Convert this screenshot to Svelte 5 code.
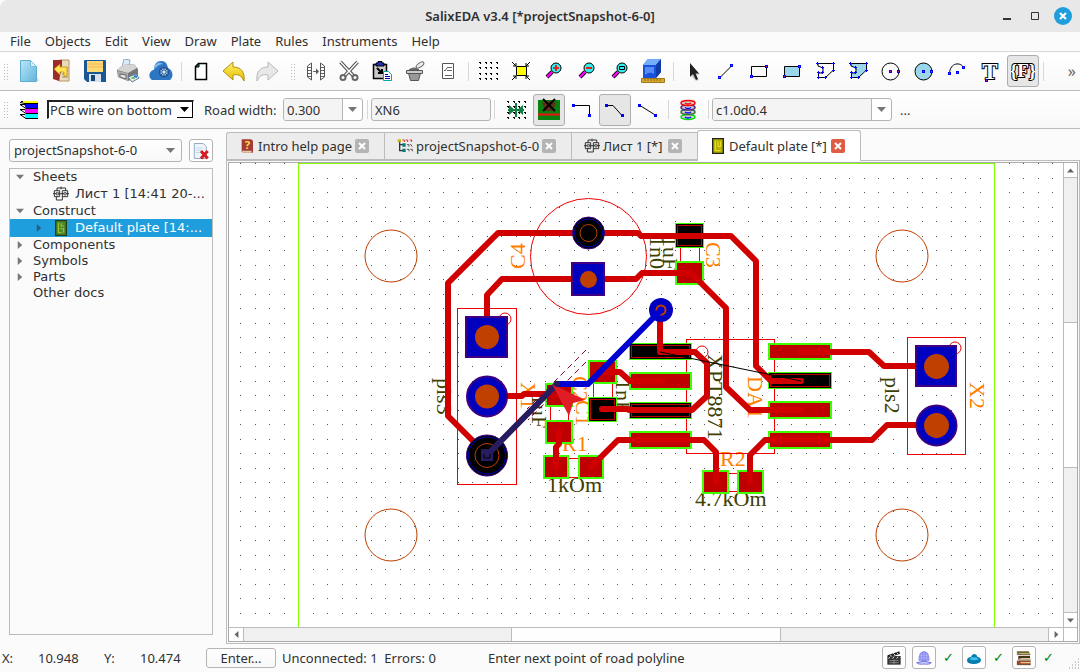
<script>
  const menus = ['File', 'Objects', 'Edit', 'View', 'Draw', 'Plate', 'Rules', 'Instruments', 'Help'];

  const gridDots = [3, 8, 14, 19]
    .map((y) => [3, 9, 14, 20].map((x) => `<path d="M${x} ${y}h2v2h-1v-1h-1z"/>`).join(''))
    .join('');
  const lens = '<path d="M10 13l-5 5" stroke="#000" stroke-width="4"/><path d="M10 13l-5 5" stroke="#f0f" stroke-width="2.4"/><circle cx="14" cy="9" r="5" fill="#3ee" stroke="#000"/>';
  const node = (x, y) => `<path d="M${x - 1.5} ${y - 1.5}h3v3h-3z" fill="#00f"/>`;
  const rnode = (x, y) => `<path d="M${x - 1.5} ${y - 1.5}h3v3h-3z" fill="#00f"/><path d="M${x - 0.5} ${y - 0.5}h1v1h-1z" fill="#f02060"/>`;
  const poly = 'M5 4.500H20.500V11L12.500 18.500H5.500V14H10V9L5 7z';
  const polyNodes = [[4.5, 4.500], [20.500, 4.500], [20.500, 11.500], [12.500, 18.500], [5.500, 18.500], [5.500, 13.500], [9.500, 13.500], [9.500, 8.500]]
    .map(([x, y]) => `<path d="M${x - 1.5} ${y}h3M${x} ${y - 1.5}v3" stroke="#00f"/>`).join('');
  const brd = 'fill="none" stroke="#000"';
  const sheet = '<path d="M2 7h8v9H2zM14 7h8v9h-8zM6 7V3h13v4M12 1v4M0 11.500h24M5 16v5h9v-5" fill="none" stroke="#333" stroke-width="1.500"/><path d="M5 9.500h3v4H5zM16.500 9.500h3v4h-3z" fill="#ccc" stroke="#333"/>';

  const icons = {
    new: '<path d="M3.500 1.500h10l6 6v15h-16z" fill="url(#gPaper)" stroke="#5eabd0"/><path d="M13.500 1.500v6h6z" fill="#d8f2fd" stroke="#79bbda"/><path d="M19 22h3l-2-4z" fill="#aaa" opacity=".5"/>',
    exit: '<path d="M9 1h10v21H9z" fill="#e8dcbd" stroke="#b99662"/><path d="M12 9h6M12 12h6M12 15h6M12 18h6" stroke="#b8a584" stroke-width="1.500"/><path d="M3 1h9v5l-3 16-6-2z" fill="#9d2b2b"/><path d="M4 10l6-5v3h7v9h-3v-4h-4v3z" fill="#ffe35a" stroke="#ba8500" stroke-width=".7"/>',
    save: '<path d="M2 1h20q1 0 1 1v21H4l-3-3V2q0-1 1-1z" fill="#1b5793"/><path d="M4 2h16v11H4z" fill="#ffd978"/><path d="M4 5h16M4 8h16" stroke="#f1b94d"/><path d="M6 15h12v8H6z" fill="#d8e2eb"/><path d="M8 16h4v6H8z" fill="#174576"/>',
    print: '<path d="M6 8l2-8 6 1-1 8z" fill="#dcebfa" stroke="#8ca9c8"/><path d="M1 11l6-5 11-1 4 5v8l-10 4L2 18z" fill="#777"/><path d="M1 11l6-5 11-1 3 4-9 5z" fill="#d4d4d4"/><path d="M2 12l10 2v8L2 18z" fill="#aaa"/><path d="M4 15l6 1v4l-6-2z" fill="#e4e4e4" stroke="#666"/><path d="M12 18l8-3 3 4-7 4z" fill="#e6f2dd" stroke="#607a9b"/><path d="M14 19l4-1 1 2z" fill="#37a440"/><path d="M18 17l3 1" stroke="#247ad2" stroke-width="2"/>',
    cloud: '<path d="M3 21c-5-3-2-10 2-10 0-6 3-9 7-9 5 0 6 3 7 7 5 2 6 9 2 12z" fill="#2c76c4"/><path d="M5 10c0-5 5-8 9-5-4 0-6 3-9 5z" fill="#83b9ec"/><circle cx="15" cy="13" r="4.500" fill="#9cc4e8" stroke="#24518d" stroke-width="1.500"/><path d="M15 8v10M10 13h10M11.500 9.500l7 7M18.500 9.500l-7 7" stroke="#24518d"/><circle cx="15" cy="13" r="1.500" fill="#d3e8fa"/>',
    doc: `<path d="M9.500 4.500h8v16h-11v-13z" fill="#fff" stroke="#000" stroke-width="1.500"/><path d="M6.500 8l3.500-3.500V8z" fill="#078080" stroke="#000"/>`,
    undo: '<path d="M1 12L11 3v5c8 0 12 5 11 14-3-6-6-7-11-6v5z" fill="url(#gYellow)" stroke="#b38f0c"/>',
    redo: '<path d="M23 12L13 3v5C5 8 1 13 2 22c3-6 6-7 11-6v5z" fill="#e8e8e8" stroke="#b8b8b8"/>',
    gap: '<path d="M3.500 7l4-3v17l-4-3zM20.500 7l-4-3v17l4-3z" fill="none" stroke="#555"/><path d="M4 8.500h3M4 11.500h3M4 14.500h3M4 17.500h3M17 8.500h3M17 11.500h3M17 14.500h3M17 17.500h3M9 12.500h5" stroke="#666"/><path d="M12 9.500l3 3-3 3z" fill="#555"/>',
    cut: '<path d="M3.500 3l13 14M20.500 3l-13 14" stroke="#555" stroke-width="3.500"/><path d="M3.500 3l13 14M20.500 3l-13 14" stroke="#fff" stroke-width="1.300"/><circle cx="6" cy="18.500" r="2.500" fill="none" stroke="#666" stroke-width="2"/><circle cx="18" cy="18.500" r="2.500" fill="none" stroke="#666" stroke-width="2"/>',
    paste: '<path d="M3.500 5.500h13v14h-13z" fill="#c8c8c8" stroke="#000" stroke-width="1.500"/><path d="M6 4h2V2.500h4V4h2v3H6z" fill="#2030b0" stroke="#000"/><path d="M7 9l5 5M12 10v4H8" fill="none" stroke="#000" stroke-width="2"/><path d="M13.500 12.500h5l3 3v6h-8z" fill="#fff" stroke="#0aa"/><path d="M15 15.500h3M15 17.500h5M15 19.500h5" stroke="#00a"/>',
    trash: '<path d="M5.500 14l2 7.500h8l2-7.500z" fill="#999" stroke="#555"/><path d="M3.500 11.500h16v3h-16z" fill="#ccc" stroke="#555"/><path d="M6 11q5-4 10 0z" fill="#888" stroke="#555"/><ellipse cx="17" cy="6" rx="4.500" ry="2" transform="rotate(-35 17 6)" fill="#eee" stroke="#666"/>',
    list: '<path d="M6.500 4.500h11v15h-11z" fill="#fff" stroke="#555"/><path d="M11 8.500h5M11 11.500h5M9 16.500h7M8 11l1 1 2-3" fill="none" stroke="#666"/>',
    dots: gridDots,
    fit: '<path d="M7.500 7.500h10v9h-10z" fill="#ff0" stroke="#000"/><path d="M3 3l4 4M21 3l-4 4M3 21l4-4M21 21l-4-4M4 7h3V4M17 4v3h3M4 17h3v3M20 17h-3v3" fill="none" stroke="#000"/>',
    zin: lens + '<path d="M11 9h6M14 6v6" stroke="#f00" stroke-width="1.600"/>',
    zout: lens + '<path d="M11 9h6" stroke="#f00" stroke-width="1.800"/>',
    zall: lens + '<path d="M11.500 7.500h5v3h-5z" fill="none" stroke="#000"/>',
    cube: '<path d="M2 6l5-6h13v13l-5 6H2z" fill="#1953dc"/><path d="M2 6l5-6h13l-5 6z" fill="#75adfb"/><path d="M15 6l5-6v13l-5 6z" fill="#103ba9"/><path d="M4 8h9v7q-5-3-9 1z" fill="#568df4"/><path d="M.5 19.500h23v4H.5z" fill="#d8aa32" stroke="#a07a1a"/><path d="M4 20v2M7 20v2M10 20v2M13 20v2M16 20v2M19 20v2" stroke="#8a6613"/>',
    cursor: '<path d="M11 7l8 8-4 1 3 5-3 1-4-4z" fill="#aaa" opacity=".6"/><path d="M9 4v14l3-3 3 6 2-1-2.500-5.500H18z" fill="#222"/>',
    line: `<path d="M6 18.500L18 6.500" ${brd}/>` + rnode(5.5, 18.5) + rnode(17.5, 6.5),
    rect: `<path d="M4.500 7.500h15v10h-15z" ${brd}/>` + rnode(4.5, 17.5) + rnode(19.5, 7.5),
    rectf: '<path d="M4.500 7.500h15v10h-15z" fill="#9ad7ea" stroke="#000"/>' + rnode(4.5, 17.5) + rnode(19.5, 7.5),
    poly: `<path d="${poly}" ${brd}/>` + polyNodes,
    polyf: `<path d="${poly}" fill="#9ad7ea" stroke="#000"/>` + polyNodes,
    circ: `<circle cx="11.500" cy="12.500" r="8.500" ${brd}/>` + rnode(11.5, 12.5) + rnode(19.5, 12.5),
    circf: '<circle cx="11.500" cy="12.500" r="8.500" fill="#9ad7ea" stroke="#000"/>' + rnode(11.5, 12.5) + rnode(19.5, 12.5),
    arc: `<path d="M4.500 14.500C5 3 16 3 18.500 8.500" ${brd}/>` + rnode(4.5, 14.5) + rnode(12.5, 13.5) + rnode(18.5, 8.5),
    text: '<text x="12" y="20" text-anchor="middle" font-family="Liberation Serif, serif" font-weight="bold" font-size="23" fill="#fff" stroke="#000" stroke-width="2" paint-order="stroke">T</text>' + rnode(8.5, 21.5),
    func: '<text x="12" y="18" text-anchor="middle" font-family="Liberation Serif, serif" font-weight="bold" font-size="19" fill="#fff" stroke="#000" stroke-width="2" paint-order="stroke">{F}</text>',
    layers: '<path d="M6 3h15v2H7z" fill="#ff0"/><path d="M7 6h14v4.500H9z" fill="#00f"/><path d="M7 11h14v4.500H9z" fill="#f0f"/><path d="M7 16h14v4.500H9z" fill="#0ff"/><path d="M6 3.500H4M21 5.500H8L3 4.500M21 10.500H9L3 6.500h5M21 15.500H9L3 11.500h5M21 20.500H9L3 16.500h5" fill="none" stroke="#000"/>',
    snap: gridDots + '<path d="M5 7l6 5-6 5zM19 7l-6 5 6 5z" fill="#108040"/><path d="M4 12h16M12 5v14" stroke="#108040" stroke-width="2"/>',
    board: '<path d="M1 2h22v20H1z" fill="#078010"/><path d="M5 5q7-4 14 0l-3 8H8z" fill="#603018"/><path d="M6 1l12 12M18 1L6 13" stroke="#000" stroke-width="2"/><path d="M1 16.500h22" stroke="#f01010" stroke-width="2"/>',
    bend: `<path d="M4 7.500h15.500v10" ${brd}/>` + node(3.5, 7.5) + node(19.5, 17.5),
    bevel: `<path d="M4 7.500h6l9 10" ${brd}/>` + node(3.5, 7.5) + node(19.5, 17.5),
    straight: `<path d="M4 7.500l16 10" ${brd}/>` + node(3.5, 7.5) + node(19.5, 17.5),
    stack: [[19, '#0d1'], [14, '#3a6a3a'], [9.5, '#52258a'], [5, '#f00']].map(([y, c]) => `<ellipse cx="12" cy="${y}" rx="7" ry="2.400" fill="#ccc" stroke="${c}" stroke-width="1.500"/><path d="M9 ${y}q3 2 6 0" fill="none" stroke="${y === 5 ? '#f00' : '#00f'}" stroke-width="1.500"/>`).join(''),
    closeproj: '<path d="M3 2h12l4 4v16H3z" fill="#edf5fc" stroke="#7590ae"/><path d="M5 8h9M5 11h8M5 14h6" stroke="#b8cee2"/><path d="M12 12l9 10M21 12l-9 10" stroke="#d51c20" stroke-width="4"/>',
    help: '<path d="M4 2h14l3 2v18H6l-2-2z" fill="#a53937"/><path d="M4 19h15v3H6z" fill="#dccaa8"/><text x="12.500" y="17" text-anchor="middle" font-family="Noto Sans, sans-serif" font-weight="bold" font-size="17" fill="#ffdf33">?</text>',
    tree: '<path d="M4 5v15M4 10h6M4 19h6" stroke="#333" stroke-width="2" fill="none"/><path d="M1 2h5v4H1z" fill="#bb0"/><path d="M8 8h5v5H8zM8 16h5v5H8z" fill="#087c7c"/><path d="M8 3h3v3M13 3h3v3M19 3h3v3" stroke="#d33" stroke-width="1.500" fill="none"/><path d="M15 10h3v3M20 9l3 4M15 17h3v3M20 17h3v3" stroke="#555" stroke-width="1.500" fill="none"/>',
    sheet,
    plate: '<path d="M4 1h16v22H4z" fill="#4c8a2c" stroke="#263e16" stroke-width="2"/><path d="M8 4v15h5M12 5v4h4M16 12v7M11 13h3" fill="none" stroke="#a8c83a" stroke-width="1.500"/>',
    platey: '<path d="M4 1h16v22H4z" fill="#b5b000" stroke="#222" stroke-width="2"/><path d="M8 4v15h8M12 5v8h4V5" fill="none" stroke="#ece52a" stroke-width="1.500"/>',
    clap: '<path d="M2 9h20v13H2z" fill="#333"/><path d="M2 8l18-6 1 4-17 5z" fill="#222"/><path d="M6 7l3 3M11 5l3 3M16 4l3 3M6 10l-2 3M12 10l-2 3M18 10l-2 3" stroke="#ddd" stroke-width="1.500"/><path d="M5 16h14M5 19h14M12 14v7" stroke="#aaa"/>',
    helmet: '<path d="M4 16C3 5 8 2 12 2s9 3 8 14z" fill="#8b8df1"/><path d="M12 3v12M8 4v11M16 4v11M5 8h14M4 12h16" stroke="#b5b7fb"/><path d="M8 15h8v5H8z" fill="#8b8df1"/><path d="M1 19q11-4 22 0-2 3-11 2-9 1-11-2z" fill="#d4d6ff" stroke="#7072db" stroke-width="1.500"/>',
    blob: '<path d="M3 19c-4-5 1-9 5-9 1-6 8-5 9 0 6 1 7 6 3 9q-8 4-17 0z" fill="#087cad"/><path d="M5 13c3-3 5-2 7-2s5 0 7 3c-5 2-9 2-14-1z" fill="#38c6ec"/>',
    books: '<path d="M2 2h17l3 5H4z" fill="#6a652e"/><path d="M4 9h17v4H4z" fill="#443317"/><path d="M2 16h20v6H2z" fill="#a24726"/><path d="M5 5h16v3H5zM7 12h15v2H7zM7 18h15v2H7z" fill="#e0c894"/><path d="M2 2v5h19M4 9v6h18M2 16v6h20" fill="none" stroke="#3b2510"/>'
  };

  const bar1 = [
    ['new', 'exit', 'save', 'print', 'cloud'], '|', ['doc', 'undo', 'redo'], ':',
    ['gap', 'cut', 'paste', 'trash', 'list'], '|', ['dots', 'fit', 'zin', 'zout', 'zall', 'cube'], '|',
    ['cursor', 'line', 'rect', 'rectf', 'poly', 'polyf', 'circ', 'circf', 'arc', 'text', 'func'], '|'
  ];
  const tabs = [
    { t: 'Intro help page', i: 'help', w: 158 },
    { t: 'projectSnapshot-6-0', i: 'tree', w: 187 },
    { t: 'Лист 1 [*]', i: 'sheet', w: 126 },
    { t: 'Default plate [*]', i: 'platey', w: 164, on: true }
  ];
  const rows = [
    { t: 'Sheets', a: 'down' },
    { t: 'Лист 1 [14:41 20-...', i: 'sheet', child: true },
    { t: 'Construct', a: 'down' },
    { t: 'Default plate [14:...', i: 'plate', child: true, a: 'right', on: true },
    { t: 'Components', a: 'right' },
    { t: 'Symbols', a: 'right' },
    { t: 'Parts', a: 'right' },
    { t: 'Other docs' }
  ];

  const pads = [
    { x: 675, y: 261, w: 29, h: 24 }, { x: 675, y: 223, w: 29, h: 25, sel: true },
    { x: 588, y: 360, w: 29, h: 24 }, { x: 588, y: 397, w: 29, h: 25, sel: true },
    { x: 545, y: 383, w: 28, h: 24 }, { x: 545, y: 420, w: 28, h: 24 },
    { x: 543, y: 455, w: 26, h: 24 }, { x: 578, y: 455, w: 26, h: 24 },
    { x: 702, y: 470, w: 27, h: 24 }, { x: 737, y: 470, w: 27, h: 24 },
    { x: 629, y: 343, w: 63, h: 17, sel: true }, { x: 629, y: 372, w: 63, h: 18 },
    { x: 629, y: 402, w: 63, h: 17, sel: true }, { x: 629, y: 431, w: 63, h: 18 },
    { x: 768, y: 343, w: 64, h: 17 }, { x: 768, y: 372, w: 64, h: 17, sel: true },
    { x: 768, y: 401, w: 64, h: 18 }, { x: 768, y: 431, w: 64, h: 18 }
  ];
  const traces = [
    '588,233 498,233 448,283 448,416 487,455',
    '588,233 638,233 641,236 731,236 756,261 756,366 771,381 801,381',
    '487,337 487,295 502,279 588,279', '588,279 636,279 642,273 691,273 726,308 726,387 750,410 801,410',
    '660,310 660,352 695,352 707,363 707,396 692,410 630,410 628,409 602,409',
    '602,372 620,372 630,381 662,381', '591,467 618,440 704,440 716,452 716,482',
    '750,482 750,455 765,440 872,440 887,425 936,425', '801,352 869,352 884,366 936,366',
    '487,396 522,396 524,394 559,394', '559,431 559,444 556,447 556,467'
  ];
  const labels = [
    ['C4', 525, 269, -90, 1], ['C3', 706, 242, 90, 1], ['X1', 521, 382, 90, 1], ['C2', 573, 376, 90, 1],
    ['C1', 576, 400, 90, 1], ['DA1', 748, 376, 90, 1], ['X2', 970, 382, 90, 1], ['R1', 562, 451, 0, 1],
    ['R2', 720, 466, 0, 1], ['1kOm', 547, 492, 0], ['4.7kOm', 695, 506, 0], ['pls3', 437, 378, 90],
    ['pls2', 885, 377, 90], ['XPT8871', 708, 354, 90], ['1n0', 650, 236, 90], ['1uF', 663, 236, 90],
    ['1uF', 532, 394, 90], ['1nF', 616, 379, 90]
  ];
</script>

{#snippet icon(name, size = 24)}
  <svg width={size} height={size} viewBox="0 0 24 24" aria-hidden="true">{@html icons[name]}</svg>
{/snippet}

{#snippet tri(dir)}
  <svg width="9" height="9" viewBox="0 0 9 9" aria-hidden="true">
    <path fill="currentColor" d={{ down: 'M0 2h9L4.500 7z', right: 'M2 0v9L7 4.500z', left: 'M7 0v9L2 4.500z', up: 'M0 7h9L4.500 2z' }[dir]} />
  </svg>
{/snippet}

<svg class="defs" width="0" height="0" aria-hidden="true">
  <linearGradient id="gPaper" x2="1" y2="1"><stop stop-color="#b9e6f8" /><stop offset="1" stop-color="#5fb4db" /></linearGradient>
  <linearGradient id="gYellow" x2="0" y2="1"><stop stop-color="#fff46b" /><stop offset="1" stop-color="#e8b900" /></linearGradient>
</svg>

<div class="window">
  <header class="title">
    <h1>SalixEDA v3.4 [*projectSnapshot-6-0]</h1>
    <div class="winbtns">
      <button aria-label="Minimize"><svg width="20" height="20"><path d="M6 13h8" stroke="#333" stroke-width="2" /></svg></button>
      <button aria-label="Maximize"><svg width="20" height="20"><path d="M6.500 6.500h7v7h-7z" fill="none" stroke="#333" /></svg></button>
      <button aria-label="Close"><svg width="20" height="20"><circle cx="10" cy="10" r="9" fill="#1f9ede" /><path d="M7 7l6 6M13 7l-6 6" stroke="#fff" stroke-width="2" /></svg></button>
    </div>
  </header>

  <nav class="menu">
    {#each menus as m}<button>{m}</button>{/each}
  </nav>

  <div class="bar">
    <i class="grip first"></i>
    {#each bar1 as g}
      {#if g === '|'}<i class="sep"></i>
      {:else if g === ':'}<i class="grip"></i>
      {:else}
        {#each g as n}<button class="tool" class:on={n === 'func'} aria-label={n}>{@render icon(n)}</button>{/each}
      {/if}
    {/each}
    <button class="more" aria-label="More tools">»</button>
  </div>

  <div class="bar second">
    <i class="grip first"></i>
    <span class="tool">{@render icon('layers')}</span>
    <div class="layer">
      <select aria-label="Layer"><option>PCB wire on bottom</option></select>
      <span class="drop">{@render tri('down')}</span>
    </div>
    <label for="width">Road width:</label>
    <div class="combo narrow"><input id="width" value="0.300" /><button aria-label="Widths">{@render tri('down')}</button></div>
    <i class="sep"></i>
    <input class="net" aria-label="Net" value="XN6" />
    <i class="sep"></i>
    {#each ['snap', 'board', 'bend', 'bevel', 'straight'] as n}
      <button class="tool" class:on={n === 'board' || n === 'bevel'} aria-label={n}>{@render icon(n)}</button>
    {/each}
    <i class="sep"></i>
    <button class="tool" aria-label="Via stack">{@render icon('stack')}</button>
    <i class="sep"></i>
    <div class="combo wide"><input aria-label="Via" value="c1.0d0.4" /><button aria-label="Vias">{@render tri('down')}</button></div>
    <button class="dots" aria-label="Choose via">...</button>
  </div>

  <main>
    <aside>
      <div class="project">
        <div class="pick">
          <select aria-label="Project"><option>projectSnapshot-6-0</option></select>
          <span>{@render tri('down')}</span>
        </div>
        <button aria-label="Close project">{@render icon('closeproj', 18)}</button>
      </div>
      <ul class="tree">
        {#each rows as r}
          <li class:child={r.child} class:on={r.on}>
            <span class="arrow">{#if r.a}{@render tri(r.a)}{/if}</span>
            {#if r.i}<span class="pic">{@render icon(r.i, 16)}</span>{/if}{r.t}
          </li>
        {/each}
      </ul>
    </aside>

    <section class="work">
      <div class="tabs">
        {#each tabs as t}
          <div class="tab" class:on={t.on} style:width="{t.w}px">
            {@render icon(t.i, 16)}
            <button class="name">{t.t}</button>
            <button class="x" aria-label="Close {t.t}"><svg width="14" height="14"><path d="M4 4l6 6M10 4l-6 6" stroke="#fff" stroke-width="2" /></svg></button>
          </div>
        {/each}
      </div>
      <div class="pane">
        <div class="view">
          <div class="canvas">
            <svg class="pcb" width="100%" height="100%">
              <defs>
                <pattern id="grid" width="29" height="29" patternUnits="userSpaceOnUse" x="240" y="178">
                  <path d="M0 0h1v1h-1zM15 0h1v1h-1zM0 14h1v1h-1zM15 14h1v1h-1z" fill="#555" />
                </pattern>
              </defs>
              <g transform="translate(-229 -163)">
                <rect x="229" y="163" width="3000" height="2000" fill="url(#grid)" shape-rendering="crispEdges" />
                <path class="edge" d="M298.500 2000V163.500H994.500V2000" />
                {#each [[391, 256], [902, 256], [391, 535], [902, 535]] as [x, y]}<circle class="hole" cx={x} cy={y} r="26" />{/each}
                {#each labels as [t, x, y, a, o]}
                  <text class:orange={o} transform="translate({x} {y}) rotate({a})">{t}</text>
                {/each}
                <g class="silk">
                  <circle cx="588.500" cy="256.500" r="58" />
                  <rect x="457.500" y="308.500" width="59" height="176" />
                  <rect x="907.500" y="337.500" width="58" height="117" />
                  <rect x="686.500" y="339.500" width="88" height="114" />
                  <circle cx="505" cy="319" r="6" /><circle cx="955" cy="348" r="6" /><circle cx="702" cy="352" r="6" />
                  <path d="M680.500 248v13M699.500 248v13M593.500 384v13M612.500 384v13M550.500 407v13M568.500 407v13M569 458.500h9M569 477.500h9M729 473.500h8M729 491.500h8" />
                </g>
                {#each pads as p}
                  {#if p.sel}
                    <rect x={p.x + 0.5} y={p.y + 0.5} width={p.w - 1} height={p.h - 1} fill="#000" stroke="#40ff00" />
                    <rect x={p.x + 2.5} y={p.y + 2.5} width={p.w - 5} height={p.h - 5} fill="none" stroke="#bf0000" />
                  {:else}
                    <rect x={p.x + 1} y={p.y + 1} width={p.w - 2} height={p.h - 2} fill="#bf0000" stroke="#40ff00" stroke-width="2" />
                  {/if}
                {/each}
                {#each traces as t}<polyline class="trace" points={t} />{/each}
                <g class="pad">
                  <rect x="572" y="263" width="32" height="32" /><rect x="466" y="317" width="41" height="40" /><rect x="916" y="346" width="40" height="40" />
                  <circle cx="487" cy="396.500" r="20" /><circle cx="936.500" cy="425.500" r="20" />
                </g>
                <g fill="#bf4000">
                  <circle cx="588.500" cy="279.500" r="8.500" /><circle cx="487" cy="337" r="12" /><circle cx="487" cy="396.500" r="12" />
                  <circle cx="936.500" cy="366.500" r="12.500" /><circle cx="936.500" cy="425.500" r="12.500" />
                </g>
                <g fill="none">
                  <circle cx="588.500" cy="233" r="16" fill="#000" stroke="#400080" /><circle cx="588.500" cy="233" r="14" stroke="#0000bf" /><circle cx="588.500" cy="233" r="8.500" stroke="#bf4000" />
                  <circle cx="487" cy="455.500" r="20.500" fill="#000" stroke="#400080" /><circle cx="487" cy="455.500" r="18.500" stroke="#0000bf" /><circle cx="487" cy="455.500" r="12" stroke="#bf4000" />
                  <circle cx="661" cy="310" r="12" fill="#0000bf" /><circle cx="661" cy="310" r="4.500" stroke="#bf4000" stroke-width="2" />
                </g>
                <path d="M660 352L801 381" stroke="#000" fill="none" />
                <path d="M586 350L527 409M586 362L528 420" stroke="#900030" stroke-dasharray="6 4" fill="none" />
                <polyline points="557,384 588,384 661,310" fill="none" stroke="#0000d0" stroke-width="6" stroke-linecap="round" />
                <path d="M487 455L557 384" stroke="#281c60" stroke-width="6" stroke-linecap="round" />
                <path d="M481 449h12v12h-12z" fill="#281c60" /><path d="M484 454v4h6v-4" fill="none" stroke="#000" />
                <path d="M552 384L585 400L573 403L569 416z" fill="#e01c24" />
                <circle cx="557" cy="384" r="3" fill="#281c60" />
              </g>
            </svg>
          </div>
          <div class="vbar">
            <span>{@render tri('up')}</span><div class="track"><i></i></div><span>{@render tri('down')}</span>
          </div>
          <div class="hbar">
            <span>{@render tri('left')}</span><div class="track"><i></i></div><span>{@render tri('right')}</span>
          </div>
          <div class="corner"></div>
        </div>
      </div>
    </section>
  </main>

  <footer>
    <span class="k">X:</span><span class="v">10.948</span>
    <span class="k">Y:</span><span class="v">10.474</span>
    <button class="enter">Enter...</button>
    <span class="stat">Unconnected: 1&nbsp; Errors: 0</span>
    <span class="hint">Enter next point of road polyline</span>
    <div class="state">
      <button aria-label="Video">{@render icon('clap', 16)}</button>
      {#each ['helmet', 'blob', 'books'] as n}
        <button aria-label={n}>{@render icon(n, 16)}</button><b>✓</b>
      {/each}
    </div>
    <svg class="size" width="12" height="12" aria-hidden="true"><path d="M10 1h1M7 4h1M10 4h1M4 7h1M7 7h1M10 7h1M1 10h1M4 10h1M7 10h1M10 10h1" stroke="#999" /></svg>
  </footer>
</div>

<style>
  :global(body) { margin: 0; }
  .window {
    height: 100vh; display: flex; flex-direction: column; overflow: hidden;
    background: #fbfbfb; color: #303030; font: 13px/16px "Noto Sans", sans-serif;
  }
  .window :global(*) { box-sizing: border-box; }
  .defs { position: absolute; }
  svg { display: block; flex: none; }
  button, input, select { font: inherit; color: inherit; margin: 0; }
  button { padding: 0; border: 0; background: none; white-space: nowrap; }
  .title { display: grid; grid-template-columns: 1fr auto 1fr; align-items: center; height: 32px; flex: none; background: #e8e8e8; border-radius: 8px 0 0; }
  h1 { grid-column: 2; margin: 0; font-size: 13px; font-weight: 600; }
  .winbtns { display: flex; justify-content: flex-end; gap: 8px; padding-right: 7px; }
  .menu { display: flex; gap: 14px; height: 20px; flex: none; padding: 0 10px 2px; border-bottom: 1px solid #d8d8d8; }
  .bar { display: flex; align-items: center; height: 39px; flex: none; background: linear-gradient(#fff, #f8f8f8); border-bottom: 1px solid #bcbcbc; }
  .bar.second { height: 38px; }
  .grip { flex: none; width: 16px; height: 17px; background: radial-gradient(circle, #bbb 1px, transparent 1px) 0 0/3px 3px; background-clip: content-box; padding: 0 4px 0 6px; }
  .grip.first { width: 13px; padding: 0 4px; }
  .sep { flex: none; width: 7px; height: 19px; padding: 0 3px; background: #d8d8d8 content-box; }
  .tool { flex: none; width: 32px; height: 32px; margin-right: 1px; display: grid; place-items: center; border: 1px solid transparent; border-radius: 3px; }
  .tool.on { background: #e6e6e6; border-color: #adadad; }
  .more { margin: 0 4px 0 auto; font-size: 16px; color: #666; }
  .layer { position: relative; width: 147px; height: 19px; margin-left: 1px; flex: none; border: 1px solid #fff; border-top: 2px solid #222; border-left: 2px solid #222; background: #fff; }
  select { appearance: none; width: 100%; border: 0; background: none; padding: 0; outline: 0; }
  .layer select { height: 16px; padding-left: 1px; line-height: 16px; }
  .drop { position: absolute; right: 0; top: 0; width: 16px; height: 16px; display: grid; place-items: center; color: #000; border-right: 1px solid #000; border-bottom: 1px solid #000; background: #fff; pointer-events: none; }
  .bar label { width: 89px; padding-left: 10px; white-space: nowrap; flex: none; }
  .combo { display: flex; height: 23px; border: 1px solid #b4b4b4; border-radius: 3px; background: #fff; overflow: hidden; color: #303030; }
  .combo input { flex: 1; min-width: 0; border: 0; padding: 0 3px; background: #f4f4f4; outline: 0; }
  .combo button { width: 20px; border-left: 1px solid #b4b4b4; display: grid; place-items: center; color: #777; }
  .narrow { width: 80px; margin-right: 1px; }
  .wide { width: 180px; }
  .net { width: 120px; height: 23px; padding: 0 3px; border: 1px solid #b4b4b4; border-radius: 3px; background: #f4f4f4; }
  .net + .sep { width: 9px; padding-right: 5px; }
  .dots { margin-left: 8px; }
  main { flex: 1; min-height: 0; display: flex; }
  aside { width: 226px; flex: none; padding: 10px 13px 10px 9px; display: flex; flex-direction: column; gap: 6px; }
  .project { display: flex; gap: 7px; height: 23px; }
  .pick { flex: 1; position: relative; border: 1px solid #b4b4b4; border-radius: 3px; background: linear-gradient(#fff, #f8f8f8); }
  .pick select { height: 20px; padding-left: 4px; }
  .pick span { position: absolute; right: 6px; top: 6px; color: #777; pointer-events: none; }
  .project button { width: 24px; border: 1px solid #b4b4b4; border-radius: 3px; display: grid; place-items: center; background: #fff; }
  .tree { flex: 1; margin: 0; padding: 0; list-style: none; border: 1px solid #bcbcbc; font-family: "DejaVu Sans", sans-serif; overflow: hidden; }
  .tree li { display: flex; align-items: center; height: 16px; padding-left: 6px; white-space: nowrap; }
  .tree li.child { height: 18px; padding-left: 25px; }
  .tree li.on { background: #1f9ede; color: #fff; }
  .tree .arrow :global(svg) { width: 8px; height: 8px; }
  .arrow { width: 17px; color: #777; }
  .child .arrow { width: 18px; }
  .on .arrow { color: #25608a; }
  .pic { width: 22px; }
  .work { flex: 1; min-width: 0; display: flex; flex-direction: column; }
  .tabs { display: flex; align-items: flex-end; height: 31px; padding-top: 1px; flex: none; }
  .tab { display: flex; align-items: center; gap: 3px; height: 28px; padding: 0 15px 0 12px; border: 1px solid #bcbcbc; border-right: 0; background: #ececec; }
  .tab:first-child { border-radius: 3px 0 0; }
  .tab.on { height: 31px; background: #fff; border-right: 1px solid #bcbcbc; border-bottom: 0; border-radius: 3px 3px 0 0; margin-bottom: -1px; z-index: 1; }
  .name { flex: 1; text-align: left; }
  .x { background: #b4b4b4; border-radius: 2px; }
  .tab.on .x { background: #df5b43; }
  .pane { flex: 1; min-height: 0; padding: 1px; border: 1px solid #bcbcbc; margin-bottom: 1px; }
  .view { height: 100%; display: grid; grid-template: minmax(0, 1fr) 14px / minmax(0, 1fr) 14px; border: 1px solid #aaa; background: #fff; }
  .canvas { overflow: hidden; }
  .vbar, .hbar { display: flex; background: #fff; color: #666; }
  .vbar { flex-direction: column; border-left: 1px solid #bcbcbc; }
  .hbar { border-top: 1px solid #bcbcbc; }
  .vbar > span, .hbar > span { display: grid; place-items: center; flex: 0 0 14px; }
  .vbar :global(svg), .hbar :global(svg) { width: 7px; height: 7px; }
  .track { flex: 1; display: flex; justify-content: center; background: #f0f0f0; border: 0 solid #bcbcbc; }
  .hbar .track { border-width: 0 1px; }
  .vbar .track { border-width: 1px 0; flex-direction: column; }
  .track i { display: block; flex: 0 0 33.500%; background: #fefefe; border: 0 solid #bcbcbc; }
  .hbar i { border-width: 0 1px; }
  .vbar i { border-width: 1px 0; }
  .corner { border: 1px solid #bcbcbc; border-width: 1px 0 0 1px; }
  .pcb text { font: 22px "Liberation Serif", serif; fill: #404000; }
  .pcb text.orange { fill: #ff8000; }
  .edge { fill: none; stroke: #80ff00; }
  .hole { fill: none; stroke: #bf4000; }
  .silk { fill: none; stroke: #f00000; }
  .trace { fill: none; stroke: #d00000; stroke-width: 6; stroke-linecap: round; stroke-linejoin: round; }
  .pad { fill: #0000bf; stroke: #400080; stroke-width: 2; }
  footer { height: 27px; flex: none; display: flex; align-items: center; padding: 0 0 2px 2px; white-space: nowrap; }
  .k { width: 36px; }
  .v { width: 66px; }
  .enter { width: 70px; height: 20px; border: 1px solid #b4b4b4; border-radius: 3px; background: linear-gradient(#fff, #f8f8f8); }
  .stat { width: 212px; padding-left: 6px; }
  .state { margin-left: auto; display: flex; align-items: center; }
  .state button { width: 24px; height: 23px; margin-right: 6px; border: 1px solid #b4b4b4; border-radius: 3px; background: #fff; display: grid; place-items: center; }
  .state b { width: 20px; padding-left: 1px; color: #008000; font: 13px/16px "DejaVu Sans", sans-serif; }
  .size { align-self: flex-end; margin-left: 6px; }
</style>
